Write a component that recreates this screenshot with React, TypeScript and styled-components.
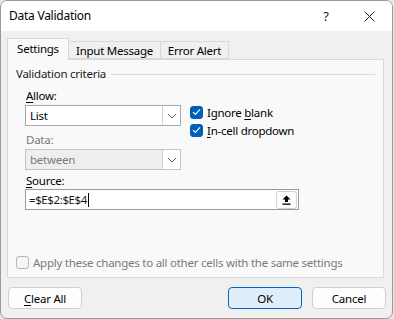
import React from "react";
import styled, { createGlobalStyle } from "styled-components";

const Global = createGlobalStyle`
  html, body { margin: 0; padding: 0; background: #e8e8e8; }
  body { font-family: "Noto Sans", "Open Sans", sans-serif; font-size: 11.5px; letter-spacing: -0.25px; color: #1a1a1a; }
  * { box-sizing: border-box; }
`;

const Window = styled.div`
  width: 393px;
  height: 319px;
  border: 1px solid #9a9a9a;
  border-radius: 7px;
  overflow: hidden;
  display: flex;
  flex-direction: column;
  background: #f0f0f0;
`;

const TitleBar = styled.div`
  height: 30px;
  background: #ffffff;
  display: flex;
  align-items: center;
  padding-left: 8px;
  flex-shrink: 0;
`;

const Title = styled.div`
  flex: 1;
  font-size: 12px;
  color: #000;
  padding-bottom: 1px;
`;

const TitleButton = styled.div<{ $w: number }>`
  width: ${(p) => p.$w}px;
  height: 30px;
  display: flex;
  align-items: center;
  justify-content: center;
  color: #1a1a1a;
`;

const Body = styled.div`
  flex: 1;
  display: flex;
  flex-direction: column;
  padding: 7px 8px 0 6px;
`;

const TabRow = styled.div`
  display: flex;
  align-items: flex-end;
  height: 21px;
  position: relative;
  z-index: 1;
`;

const Tab = styled.div<{ $active?: boolean; $w: number }>`
  width: ${(p) => p.$w}px;
  height: ${(p) => (p.$active ? 22 : 18)}px;
  margin-bottom: ${(p) => (p.$active ? -1 : 0)}px;
  background: ${(p) => (p.$active ? "#f9f9f9" : "#f0f0f0")};
  border: 1px solid #d9d9d9;
  border-bottom: ${(p) => (p.$active ? "none" : "1px solid #d9d9d9")};
  margin-left: ${(p) => (p.$active ? 0 : -1)}px;
  display: flex;
  align-items: center;
  justify-content: center;
  padding-bottom: ${(p) => (p.$active ? 2 : 0)}px;
  color: #000;
  white-space: nowrap;
`;

const Panel = styled.div`
  width: 377px;
  height: 219px;
  background: #f9f9f9;
  border: 1px solid #d9d9d9;
  padding: 5px 8px 0 8px;
  display: flex;
  flex-direction: column;
`;

const GroupHeader = styled.div`
  display: flex;
  align-items: center;
  gap: 5px;
  height: 17px;
`;

const GroupLine = styled.div`
  flex: 1;
  height: 1px;
  background: #dcdcdc;
  margin-top: 1px;
`;

const Criteria = styled.div`
  display: flex;
  padding-left: 9px;
  margin-top: 6px;
  gap: 9px;
`;

const LeftCol = styled.div`
  width: 156px;
  display: flex;
  flex-direction: column;
`;

const RightCol = styled.div`
  display: flex;
  flex-direction: column;
  gap: 4px;
  padding-top: 17px;
`;

const FieldLabel = styled.div<{ $disabled?: boolean }>`
  height: 15px;
  line-height: 15px;
  padding-left: 1px;
  color: ${(p) => (p.$disabled ? "#7a7a7a" : "#000")};
  margin-bottom: 1px;
`;

const Combo = styled.div<{ $disabled?: boolean }>`
  height: 21px;
  display: flex;
  background: ${(p) => (p.$disabled ? "#eeeeee" : "#ffffff")};
  border: 1px solid ${(p) => (p.$disabled ? "#c4c4c4" : "#a8a8a8")};
  color: ${(p) => (p.$disabled ? "#7a7a7a" : "#000")};
  margin-top: 1px;
  margin-bottom: ${(p) => (p.$disabled ? 0 : 6)}px;
`;

const ComboText = styled.div`
  flex: 1;
  display: flex;
  align-items: center;
  padding-left: 4px;
`;

const ComboButton = styled.div`
  width: 18px;
  border-left: 1px solid #d4d4d4;
  background: #ffffff;
  display: flex;
  align-items: center;
  justify-content: center;
`;

const CheckRow = styled.div<{ $disabled?: boolean }>`
  display: flex;
  align-items: center;
  gap: 4px;
  height: 14px;
  color: ${(p) => (p.$disabled ? "#7a7a7a" : "#000")};
`;

const Box = styled.div<{ $checked?: boolean }>`
  width: 13px;
  height: 13px;
  border-radius: 3px;
  background: ${(p) => (p.$checked ? "#005fb8" : "#f6f6f6")};
  border: 1px solid ${(p) => (p.$checked ? "#005fb8" : "#b8b8b8")};
  display: flex;
  align-items: center;
  justify-content: center;
  flex-shrink: 0;
`;

const SourceBlock = styled.div`
  padding-left: 9px;
  margin-top: 3px;
  display: flex;
  flex-direction: column;
`;

const SourceInput = styled.div`
  width: 274px;
  height: 21px;
  background: #ffffff;
  border: 1px solid #9a9a9a;
  display: flex;
  align-items: center;
  padding: 0 1px 0 3px;
`;

const SourceText = styled.div`
  flex: 1;
  display: flex;
  align-items: center;
  letter-spacing: -0.4px;
`;

const Caret = styled.span`
  display: inline-block;
  width: 1px;
  height: 14px;
  background: #000;
  margin-left: 1px;
`;

const CollapseButton = styled.div`
  width: 21px;
  height: 18px;
  border: 1px solid #d0d0d0;
  border-radius: 3px;
  background: #fdfdfd;
  display: flex;
  align-items: center;
  justify-content: center;
`;

const ApplyRow = styled.div`
  margin-top: auto;
  margin-bottom: 8px;
`;

const Footer = styled.div`
  display: flex;
  align-items: center;
  padding: 9px 0 0 1px;
  margin-right: -2px;
  gap: 10px;
`;

const Button = styled.div<{ $primary?: boolean }>`
  width: 74px;
  height: 22px;
  border-radius: 4px;
  display: flex;
  align-items: center;
  justify-content: center;
  background: ${(p) => (p.$primary ? "#e0eef9" : "#fdfdfd")};
  border: 1px solid ${(p) => (p.$primary ? "#0067c0" : "#d0d0d0")};
  color: #000;
`;

const Spacer = styled.div`
  flex: 1;
`;

const U = styled.span`
  text-decoration: underline;
  text-underline-offset: 2px;
`;

const Check = () => (
  <svg width="9" height="8" viewBox="0 0 9 8">
    <path d="M1 4.2 L3.4 6.4 L8 1.4" fill="none" stroke="#ffffff" strokeWidth="1.1" />
  </svg>
);

const Chevron = () => (
  <svg width="10" height="6" viewBox="0 0 10 6">
    <path d="M1 1 L5 5 L9 1" fill="none" stroke="#5a5a5a" strokeWidth="1" />
  </svg>
);

const CheckBox = ({ checked, disabled, children }: { checked?: boolean; disabled?: boolean; children: React.ReactNode }) => (
  <CheckRow $disabled={disabled}>
    <Box $checked={checked}>{checked && <Check />}</Box>
    <span>{children}</span>
  </CheckRow>
);

export default function App() {
  return (
    <>
      <Global />
      <Window>
        <TitleBar>
          <Title>Data Validation</Title>
          <TitleButton $w={40}>
            <span style={{ fontSize: 13 }}>?</span>
          </TitleButton>
          <TitleButton $w={46}>
            <svg width="11" height="11" viewBox="0 0 11 11">
              <path d="M0.5 0.5 L10.5 10.5 M10.5 0.5 L0.5 10.5" stroke="#1a1a1a" strokeWidth="1" />
            </svg>
          </TitleButton>
        </TitleBar>
        <Body>
          <TabRow>
            <Tab $active $w={62}>Settings</Tab>
            <Tab $w={93}>Input Message</Tab>
            <Tab $w={69}>Error Alert</Tab>
          </TabRow>
          <Panel>
            <GroupHeader>
              <span>Validation criteria</span>
              <GroupLine />
            </GroupHeader>
            <Criteria>
              <LeftCol>
                <FieldLabel>
                  <U>A</U>llow:
                </FieldLabel>
                <Combo>
                  <ComboText>List</ComboText>
                  <ComboButton>
                    <Chevron />
                  </ComboButton>
                </Combo>
                <FieldLabel $disabled>Data:</FieldLabel>
                <Combo $disabled>
                  <ComboText>between</ComboText>
                  <ComboButton>
                    <Chevron />
                  </ComboButton>
                </Combo>
              </LeftCol>
              <RightCol>
                <CheckBox checked>
                  Ignore <U>b</U>lank
                </CheckBox>
                <CheckBox checked>
                  <U>I</U>n-cell dropdown
                </CheckBox>
              </RightCol>
            </Criteria>
            <SourceBlock>
              <FieldLabel>
                <U>S</U>ource:
              </FieldLabel>
              <SourceInput>
                <SourceText>
                  =$E$2:$E$4<Caret />
                </SourceText>
                <CollapseButton>
                  <svg width="9" height="10" viewBox="0 0 9 10">
                    <path d="M4.5 0.5 L8.5 4.5 L6 4.5 L6 7 L3 7 L3 4.5 L0.5 4.5 Z" fill="#000" />
                    <rect x="0.5" y="8.5" width="8" height="1.3" fill="#000" />
                  </svg>
                </CollapseButton>
              </SourceInput>
            </SourceBlock>
            <ApplyRow>
              <CheckBox disabled>Apply these changes to all other cells with the same settings</CheckBox>
            </ApplyRow>
          </Panel>
          <Footer>
            <Button>
              <span>
                <U>C</U>lear All
              </span>
            </Button>
            <Spacer />
            <Button $primary>OK</Button>
            <Button>Cancel</Button>
          </Footer>
        </Body>
      </Window>
    </>
  );
}
